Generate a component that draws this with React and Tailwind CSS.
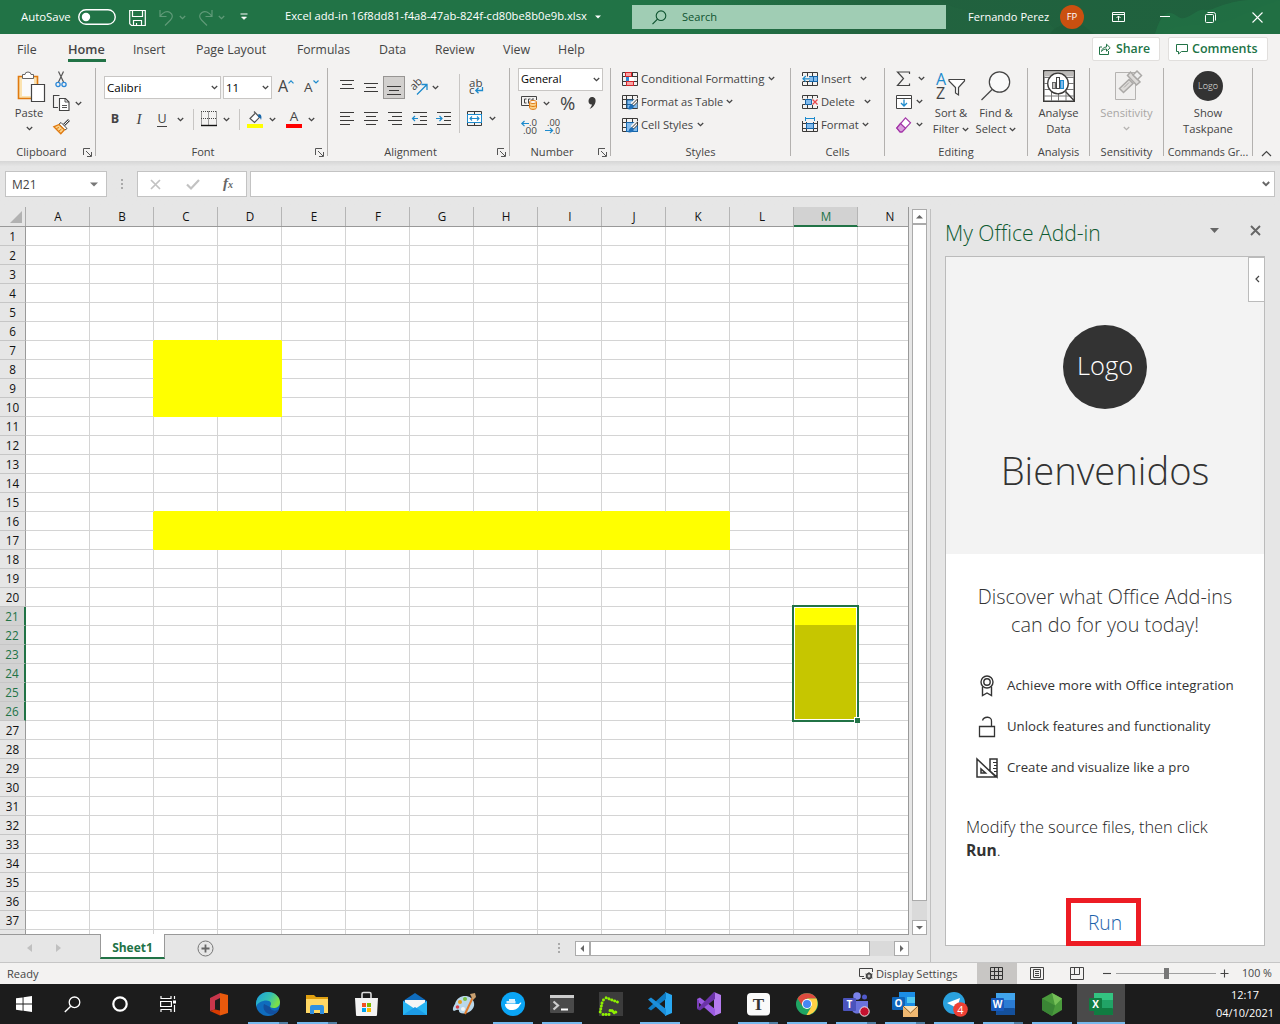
import React from "react";

/* ---------- small building blocks ---------- */
const Svg = ({ w, h, className = "", children, ...rest }) => (
  <svg width={w} height={h} viewBox={`0 0 ${w} ${h}`} fill="none" className={`shrink-0 overflow-visible ${className}`} {...rest}>
    {children}
  </svg>
);
const Chev = ({ className = "", color = "#444" }) => (
  <Svg w={7} h={5} className={className}>
    <path d="M.8 1l2.7 2.6L6.2 1" stroke={color} strokeWidth="1.3" />
  </Svg>
);
const B = "#1e8bcd";

const Launcher = () => (
  <Svg w={9} h={9}>
    <path d="M.5 7V.5H7M3 3l5 5M8.5 4v4.500H4" stroke="#555" />
  </Svg>
);

function Group({ className, label, launcher, children }) {
  return (
    <section className={`flex shrink-0 ${className}`}>
      <div className="flex min-w-0 flex-1 flex-col">
        <div className="h-[76px] w-full shrink-0">{children}</div>
        <div className="flex h-[16px] shrink-0 items-center">
          <div className="flex-1 text-center text-[11.1px] whitespace-nowrap">{label}</div>
          {launcher && <div className="w-[12px] shrink-0"><Launcher /></div>}
        </div>
      </div>
      <div className="h-[88px] w-px bg-[#b3b1af]" />
    </section>
  );
}

/* ---------- title bar ---------- */
function TitleBar() {
  return (
    <header className="relative flex h-[34px] items-center bg-linear-to-r from-[#217346] from-55% via-[#22633f] via-68% to-[#20643f] text-[11.2px] text-white">
      <Svg w={340} h={34} className="absolute right-0 top-0">
        <path d="M0 0c30 20 60 4 90 14s20 20 40 20h90c20-14 50-6 70-14s30-14 50-20z" fill="#1f5f3b" opacity=".35" />
        <path d="M215 34c5-18 12-26 22-18s18-8 28-6 20-14 75-10v34z" fill="#217346" opacity=".75" />
        <path d="M110 34c6-10 22-12 34-8l10 8z" fill="#1c5a38" opacity=".5" />
      </Svg>
      <div className="z-10 flex w-full items-center">
        <span className="ml-[21px] w-[57px] text-[11.4px]">AutoSave</span>
        <Svg w={38} h={17}>
          <rect x=".75" y=".750" width="36.500" height="14.500" rx="7.250" stroke="#fff" strokeWidth="1.400" />
          <circle cx="8" cy="8" r="4.200" fill="#fff" />
        </Svg>
        <Svg w={17} h={17} className="ml-[13px]">
          <path d="M.7 1.500h15.600v15H2.500L.7 14.700zM3.500 1.500v6h10v-6M4.500 16.500v-5h8v5M7.500 16v-2" stroke="#fff" strokeWidth="1.200" />
        </Svg>
        <Svg w={15} h={17} className="ml-[13px]">
          <path d="M1 1v6.500h6.500M1.200 7.200C4 3 8 1.500 11 3.500s3 5 .5 7.500L6 16.500" stroke="#5f9a78" strokeWidth="1.200" />
        </Svg>
        <Chev className="ml-[5px]" color="#5f9a78" />
        <Svg w={15} h={17} className="ml-[12px]">
          <path d="M14 1v6.500H7.500M13.800 7.200C11 3 7 1.500 4 3.500s-3 5-.5 7.500L9 16.500" stroke="#5f9a78" strokeWidth="1.200" />
        </Svg>
        <Chev className="ml-[5px]" color="#5f9a78" />
        <Svg w={8} h={8} className="ml-[15px]">
          <path d="M.5 1h7" stroke="#fff" />
          <path d="M1.500 4h5L4 6.500z" fill="#fff" stroke="#fff" strokeWidth=".6" />
        </Svg>
        <span className="-mt-px ml-[37px] w-[310px] text-[11.23px] whitespace-nowrap">Excel add-in 16f8dd81-f4a8-47ab-824f-cd80be8b0e9b.xlsx</span>
        <Svg w={6} h={4}><path d="M0 .5h6L3 3.500z" fill="#fff" /></Svg>
        <div className="ml-[31px] flex h-[24px] w-[314px] items-center bg-[#a0cdb4] text-[11.1px] text-[#0f5430]">
          <Svg w={15} h={15} className="ml-[20px]">
            <circle cx="9" cy="5.700" r="4.800" stroke="#0f5430" strokeWidth="1.100" />
            <path d="M5.500 9.200L.5 14.200" stroke="#0f5430" strokeWidth="1.200" />
          </Svg>
          <span className="ml-[15px]">Search</span>
        </div>
        <span className="mt-px ml-[22px] w-[92px] text-[11.05px] whitespace-nowrap">Fernando Perez</span>
        <div className="flex h-[24px] w-[24px] shrink-0 items-center justify-center rounded-full bg-[#ca5010] text-[9.500px]">FP</div>
        <Svg w={13} h={10} className="ml-[28px]">
          <path d="M.5.5h12v9H.5zM.5 2.500h12M6.500 8.500V4M4.500 6l2-2 2 2" stroke="#fff" />
        </Svg>
        <Svg w={10} h={2} className="ml-[35px]"><path d="M0 .5h10" stroke="#fff" /></Svg>
        <Svg w={11} h={11} className="ml-[35px]">
          <rect x=".5" y="2.500" width="8" height="8" rx="1" stroke="#fff" />
          <path d="M2.500.5h6q2 0 2 2v6" stroke="#fff" />
        </Svg>
        <Svg w={11} h={11} className="ml-[36px]"><path d="M.5.5l10 10M10.500.5l-10 10" stroke="#fff" strokeWidth="1.100" /></Svg>
      </div>
    </header>
  );
}

/* ---------- tabs ---------- */
function Tabs() {
  return (
    <nav className="flex h-[32px] items-start text-[12.4px]">
      <span className="ml-[17px] mt-[7px] w-[51px]">File</span>
      <span className="mt-[6px] w-[38px] border-b-[3px] border-[#217346] pb-px text-[12.7px] leading-[18px] font-semibold">Home</span>
      <span className="ml-[27px] mt-[7px] w-[63px] text-[12px]">Insert</span>
      <span className="mt-[7px] w-[101px]">Page Layout</span>
      <span className="mt-[7px] w-[82px] text-[12.2px]">Formulas</span>
      <span className="mt-[7px] w-[56px]">Data</span>
      <span className="mt-[7px] w-[68px] text-[12.1px]">Review</span>
      <span className="mt-[7px] w-[55px]">View</span>
      <span className="mt-[7px]">Help</span>
      <div className="mr-[12px] ml-auto mt-[3px] flex gap-[8px] font-semibold text-[#217346]">
        <div className="flex h-[24px] w-[68px] items-center rounded-[2px] border border-[#e1dfdd] bg-white text-[12.3px]">
          <Svg w={12} h={12} className="ml-[6px]">
            <path d="M3 4H.5v7.500h9V8M2.500 8.500C3 5.500 5 4 7.500 4V1.200l3.700 3.600-3.700 3.400V6C5.500 6 4 6.500 2.500 8.500z" stroke="#217346" />
          </Svg>
          <span className="mt-px ml-[5px]">Share</span>
        </div>
        <div className="flex h-[24px] w-[100px] items-center rounded-[2px] border border-[#e1dfdd] bg-white text-[12.5px]">
          <Svg w={12} h={11} className="ml-[7px]"><path d="M.5.5h11v7H5.500L2.500 10V7.500h-2z" stroke="#217346" /></Svg>
          <span className="mt-px ml-[4px]">Comments</span>
        </div>
      </div>
    </nav>
  );
}

/* ---------- ribbon icons ---------- */
const Lines = ({ rows, className }) => (
  <Svg w={14} h={14} className={className}>
    {rows.map(([x, y, w]) => <path key={y} d={`M${x} ${y + 0.5}h${w}`} stroke="#3b3a39" />)}
  </Svg>
);
const Indent = ({ right }) => (
  <Svg w={15} h={14}>
    <path d="M1 .5h14M8 4.500h7M8 8.500h7M1 12.500h14" stroke="#3b3a39" />
    <path d={right ? "M0 6.500h5.500M3.500 4l2.500 2.500L3.500 9" : "M.8 6.500H6M3 4L.5 6.500 3 9"} stroke={B} strokeWidth="1.200" />
  </Svg>
);
const Sep = ({ className = "" }) => <div className={`w-px bg-[#c8c6c4] ${className}`} />;

const Brush = () => (
  <>
    <path d="M15.800 3.500L10 9.500" stroke="#f3f2f1" strokeWidth="4" />
    <path d="M15.500 4L10 9.500l1.500 1.500 4-4z" fill="#fff" stroke="#333" strokeWidth="1" />
    <path d="M10.800 9.500c-2-.5-3.300.8-3.800 2.500-.3 1-1 1.500-2.200 1.700 3.400 1.800 7.200.3 7-2.500z" fill="#1e6fb8" />
  </>
);
const TableBase = () => (
  <path d="M.5.5h15v13H.5zM.5 4.500h15M.5 9.500h15M4.500.5v13M10.500.5v13" stroke="#3b3a39" />
);
const CondFmt = () => (
  <Svg w={16} h={14}><TableBase />
    <rect x="3.500" y=".5" width="6" height="4" fill="#f8a5a5" stroke="#d3262b" />
    <rect x="4" y="5" width="3" height="4.500" fill="#2b88d8" /><rect x="7" y="5" width="5" height="4" fill="#fff" />
    <rect x="4.500" y="9.500" width="7" height="4" fill="#f8a5a5" stroke="#d3262b" />
  </Svg>
);
const FmtTable = () => (
  <Svg w={16} h={14}><TableBase /><rect x="5" y="5" width="10.500" height="8" fill="#83bbec" /><path d="M5 9.500h6M5 13V5h10M10.500 5v5" stroke="#1565a9" /><Brush /></Svg>
);
const CellSty = () => (
  <Svg w={16} h={14}><TableBase /><rect x="4.500" y="4.500" width="11" height="9" fill="#83bbec" stroke="#1565a9" /><Brush /></Svg>
);
const InsertIc = () => (
  <Svg w={16} h={14}><path d="M.5 4V.5h15v13H.5V10M5.500.5v4M10.500.5v13M.5 9.500h15M5.500 10v3.500" stroke="#3b3a39" />
    <rect x="7.500" y="4.500" width="8" height="5" fill="#83bbec" stroke="#1565a9" /><path d="M11.500 4.500v5" stroke="#1565a9" />
    <path d="M0 6.800h8" stroke="#f3f2f1" strokeWidth="3" /><path d="M8 6.800H1M3.800 4L1 6.800l2.800 2.800" stroke={B} strokeWidth="1.200" /></Svg>
);
const DeleteIc = () => (
  <Svg w={16} h={14}><path d="M.5 3.500v-3h15V3M5.500.5v3M10.500.5v3M.5 9.500v4h15V11M5.500 10v3.500M10.500 10v3.500M.5 4.500h3M.5 9.500h3" stroke="#3b3a39" />
    <path d="M3.500 4.500h6v5h-6z" fill="#83bbec" stroke="#1565a9" /><path d="M10.500 4.500l5 5M15.500 4.500l-5 5" stroke="#e8474c" strokeWidth="1.300" /></Svg>
);
const FormatIc = () => (
  <Svg w={16} h={16}><path d="M3.500 0v4M12.500 0v4M3.500 1.500h9" stroke={B} />
    <path d="M.5 4v10.500h15V4M.5 6.500h15M.5 11.500h15M4.500 5v9.500M11.500 5v9.500" stroke="#3b3a39" />
    <rect x="4.500" y="6.500" width="7" height="5" fill="#83bbec" stroke="#1565a9" /></Svg>
);

/* ---------- ribbon ---------- */
function Ribbon() {
  return (
    <div className="flex h-[94px] pt-[2px] text-[11.2px]">
      <Group className="w-[96px]" label="Clipboard" launcher>
        <div className="flex">
          <div className="flex w-[58px] flex-col items-center">
            <Svg w={30} h={32} className="mt-[3px] ml-[4px]">
              <path d="M2.500 5.500h19v22h-19z" fill="#fbe3b0" stroke="#e07a10" strokeWidth="1.600" />
              <path d="M6 8h12v17H6z" fill="#fafafa" />
              <path d="M6.500 7.500v-4H9q0-2.500 3-2.500t3 2.500h2.500v4z" fill="#fff" stroke="#666" />
              <path d="M15.500 13.500h13v17h-13z" fill="#fff" stroke="#444" strokeWidth="1.200" />
            </Svg>
            <span className="mt-[1px] leading-[18px]">Paste</span>
            <Chev className="mt-[4px]" />
          </div>
          <div className="flex flex-col">
            <Svg w={16} h={17} className="ml-[-5px] mt-[3px]">
              <path d="M5.500.5l5 10.500M10.500.5l-5 10.500" stroke="#555" strokeWidth="1.200" />
              <circle cx="5" cy="13.500" r="2.100" stroke="#2b88d8" strokeWidth="1.300" /><circle cx="11" cy="13.500" r="2.100" stroke="#2b88d8" strokeWidth="1.300" />
            </Svg>
            <div className="mt-[7px] ml-[-5px] flex items-center">
              <Svg w={17} h={16}>
                <path d="M5 12.500H.5v-12h6" stroke="#444" strokeWidth="1.100" />
                <path d="M6.500 3.500h6l3.500 3.500v8.500H6.500z" fill="#fff" stroke="#444" strokeWidth="1.100" /><path d="M12 3.500V7h4M9 10.500h5M9 12.500h5" stroke="#444" strokeWidth=".9" />
              </Svg>
              <Chev className="ml-[5px]" />
            </div>
            <Svg w={17} h={16} className="mt-[8px] ml-[-5px]">
              <path d="M16 1l-5 5" stroke="#444" strokeWidth="2.600" /><path d="M15.700 1.300l-4.500 4.500" stroke="#fff" strokeWidth="1" />
              <path d="M8 3.500l6 6-2 1.500-6-5.800z" fill="#fff" stroke="#444" />
              <path d="M6 5.500L.8 7.800l7 7 3.700-4z" fill="#fbd28a" stroke="#e07a10" strokeWidth="1.300" /><path d="M3.500 9.500l2.500-1M6 12l2.500-2" stroke="#e07a10" />
            </Svg>
          </div>
        </div>
      </Group>

      <Group className="w-[232px]" label={<span className="mr-[5px]">Font</span>} launcher>
        <div className="flex pt-[8px]">
          <div className="ml-[8px] flex h-[23px] w-[117px] items-center justify-between border border-[#c8c6c4] bg-white px-[2px] text-[11.600px] text-black">Calibri<Chev /></div>
          <div className="ml-[2px] flex h-[23px] w-[49px] items-center justify-between border border-[#c8c6c4] bg-white px-[2px] text-[11.5px] text-black">11<Chev /></div>
          <div className="ml-[6px] flex w-[26px]"><span className="text-[16px] leading-[20px]">A</span><Svg w={6} h={4} className="mt-[4px]"><path d="M.5 3.300L3 .8l2.500 2.500" stroke={B} strokeWidth="1.200" /></Svg></div>
          <div className="flex"><span className="text-[13.5px] leading-[22px]">A</span><Svg w={6} h={4} className="mt-[4px]"><path d="M.5.5L3 3 5.500.5" stroke={B} strokeWidth="1.200" /></Svg></div>
        </div>
        <div className="mt-[9px] flex h-[22px] items-center text-[12.5px]">
          <span className="w-[38px] text-center font-bold">B</span>
          <span className="w-[10px] text-center font-['Liberation_Serif'] text-[15px] italic">I</span>
          <span className="ml-[13px] w-[10px] border-b border-[#444] text-center leading-[14px]">U</span>
          <Chev className="ml-[10px]" />
          <Sep className="ml-[9px] h-[21px]" />
          <Svg w={16} h={16} className="ml-[7px]">
            <path d="M.5.5v13M15.500.5v13M7.500.5v13" stroke="#444" strokeDasharray="1 1" /><path d="M0 .5h16M0 7.500h16" stroke="#444" strokeDasharray="1 1" /><path d="M0 14.500h16" stroke="#111" strokeWidth="1.400" />
          </Svg>
          <Chev className="ml-[6px]" />
          <Sep className="ml-[9px] h-[21px]" />
          <Svg w={16} h={18} className="ml-[7px]">
            <path d="M8 3.500l-5 5 4.500 4 5-5.200L7 1.500" fill="#fff" stroke="#555" strokeWidth="1.200" /><path d="M11.500 4c3 0 3.500 3 2.500 6-.5-2-1.500-3-3-3z" fill="#1565a9" /><rect y="14" width="16" height="4" fill="#ff0" />
          </Svg>
          <Chev className="ml-[6px]" />
          <div className="-mt-px ml-[10px] flex w-[16px] flex-col items-center">
            <span className="text-[13.500px] leading-[15px]">A</span><span className="h-[4px] w-full bg-[#f00]" />
          </div>
          <Chev className="ml-[6px]" />
        </div>
      </Group>

      <Group className="w-[182px]" label={<span className="mr-[4px]">Alignment</span>} launcher>
        <div className="flex">
          <div className="ml-[7px] w-[124px] pt-[8px]">
            <div className="flex h-[23px] items-center">
              <div className="flex w-[24px] justify-center"><Lines className="mb-[6px]" rows={[[0, 2, 14], [2, 6, 10], [0, 10, 14]]} /></div>
              <div className="flex w-[24px] justify-center"><Lines rows={[[0, 2, 14], [2, 6, 10], [0, 10, 14]]} /></div>
              <div className="flex h-[23px] w-[22px] items-center justify-center border border-[#979593] bg-[#d2d0ce]"><Lines className="mt-[6px]" rows={[[0, 2, 14], [2, 6, 10], [0, 10, 14]]} /></div>
              <Svg w={18} h={17} className="ml-[6px]">
                <text x="2" y="10" transform="rotate(-45 5 10)" fontSize="11" fill="#444">ab</text>
                <path d="M6 15.500L15.500 6M10.500 5.500H16v5.500" stroke={B} strokeWidth="1.300" />
              </Svg>
              <Chev className="ml-[3px]" />
            </div>
            <div className="mt-[9px] flex h-[22px] items-center">
              <div className="flex w-[24px] justify-center"><Lines rows={[[0, 0, 14], [0, 4, 10], [0, 8, 14], [0, 12, 10]]} /></div>
              <div className="flex w-[24px] justify-center"><Lines rows={[[0, 0, 14], [2, 4, 10], [0, 8, 14], [2, 12, 10]]} /></div>
              <div className="flex w-[24px] justify-center"><Lines rows={[[0, 0, 14], [4, 4, 10], [0, 8, 14], [4, 12, 10]]} /></div>
              <div className="flex w-[25px] justify-center"><Indent /></div>
              <div className="flex w-[23px] justify-center"><Indent right /></div>
            </div>
          </div>
          <Sep className="mt-[6px] h-[59px]" />
          <div className="pt-[8px] pl-[7px]">
            <Svg w={17} h={18} className="mt-[2px] ml-[2px]">
              <text x="0" y="8.500" fontSize="11.500" fill="#444">ab</text><text x="0" y="16" fontSize="11.500" fill="#444">c</text>
              <path d="M13.500 9v3.500H7M9.500 9.800L6.800 12.500l2.700 2.700" stroke={B} strokeWidth="1.300" />
            </Svg>
            <div className="mt-[15px] flex items-center">
              <Svg w={15} h={15}>
                <path d="M.5.5h14v14H.5zM7.500.5v3M7.500 11.500v3" stroke="#3b3a39" /><rect x=".5" y="3.500" width="14" height="8" fill="#fff" stroke={B} /><path d="M3 7.500h9M5 5.500l-2 2 2 2M10 5.500l2 2-2 2" stroke={B} strokeWidth="1.100" />
              </Svg>
              <Chev className="ml-[7px]" />
            </div>
          </div>
        </div>
      </Group>

      <Group className="w-[101px]" label={<span className="mr-[4px]">Number</span>} launcher>
        <div className="ml-[8px] flex h-[23px] w-[85px] items-center justify-between border border-[#c8c6c4] bg-white px-[2px] text-[11px] text-black"><span className="mb-px">General</span><Chev /></div>
        <div className="flex h-[24px] items-center">
          <Svg w={17} h={14} className="ml-[11px]">
            <path d="M8 9.500H.5v-9h15V4" stroke="#444" /><path d="M5.500 3h-2v4h2M7.500 7.500V3h2M11 5V3h2" stroke="#444" />
            <path d="M8.500 6v5.500c0 2.500 7 2.500 7 0V6" fill="#fbd28a" stroke="#e07a10" /><ellipse cx="12" cy="6" rx="3.500" ry="1.500" fill="#fff" stroke="#e07a10" /><path d="M8.500 9c0 2 7 2 7 0" stroke="#e07a10" />
          </Svg>
          <Chev className="ml-[5px]" />
          <span className="ml-[10px] w-[17px] text-[18.500px]">%</span>
          <Svg w={8} h={12} className="ml-[11px]"><path d="M4 0c3 0 4 2.500 3.500 5S5 10.500 1.500 12c1.500-2 2.200-3 2.500-4.500C2 8 .5 6.200.5 4S2 0 4 0z" fill="#3b3a39" /></Svg>
        </div>
        <div className="mt-[4px] flex items-center">
          <Svg w={17} h={17} className="ml-[11px]">
            <path d="M8 4.500H.8M3.500 2L.8 4.500l2.700 2.700" stroke={B} strokeWidth="1.200" /><text x="8" y="7" fontSize="9.500" textLength="8" lengthAdjust="spacingAndGlyphs" fill="#444">.0</text><text x="2" y="15" fontSize="9.500" textLength="14" lengthAdjust="spacingAndGlyphs" fill="#444">.00</text>
          </Svg>
          <Svg w={17} h={17} className="ml-[7px]">
            <path d="M0 11.500h7.500M5 9L7.600 11.500 5 14" stroke={B} strokeWidth="1.200" /><text x="2" y="7" fontSize="9.500" textLength="13" lengthAdjust="spacingAndGlyphs" fill="#444">.00</text><text x="8" y="15" fontSize="9.500" textLength="7" lengthAdjust="spacingAndGlyphs" fill="#444">.0</text>
          </Svg>
        </div>
      </Group>

      <Group className="w-[180px]" label="Styles">
        <div className="-mt-[1px] ml-[11px] whitespace-nowrap">
          <div className="flex h-[23px] items-center gap-[3px]"><CondFmt /><span className="w-[124px] text-[11.500px]">Conditional Formatting</span><Chev /></div>
          <div className="flex h-[23px] items-center gap-[3px]"><FmtTable /><span className="mt-px w-[82px] text-[11.050px]">Format as Table</span><Chev /></div>
          <div className="flex h-[23px] items-center gap-[3px]"><CellSty /><span className="mt-px w-[53px]">Cell Styles</span><Chev /></div>
        </div>
      </Group>

      <Group className="w-[94px]" label="Cells">
        <div className="-mt-[1px] ml-[11px] whitespace-nowrap">
          <div className="flex h-[23px] items-center gap-[3px]"><InsertIc /><span className="mt-px w-[36px]">Insert</span><Chev /></div>
          <div className="flex h-[23px] items-center gap-[3px]"><DeleteIc /><span className="mt-px w-[40px]">Delete</span><Chev /></div>
          <div className="flex h-[23px] items-center gap-[3px]"><FormatIc /><span className="mt-px w-[38px]">Format</span><Chev /></div>
        </div>
      </Group>

      <Group className="w-[143px]" label="Editing">
        <div className="flex">
          <div className="-mt-[1px] ml-[11px] w-[34px]">
            <div className="flex h-[23px] items-center"><Svg w={16} h={16}><path d="M13.500 3V1H1.500l6 6.500-6 7h12v-2" stroke="#444" strokeWidth="1.200" /></Svg><Chev className="ml-[6px]" /></div>
            <div className="flex h-[23px] items-center"><Svg w={16} h={14}><path d="M.5.5h15v13H.5zM.5 3.500h15" fill="#fff" stroke="#444" /><path d="M8 4.500V11M5 8l3 3 3-3" stroke={B} strokeWidth="1.300" /></Svg><Chev className="ml-[4px]" /></div>
            <div className="flex h-[23px] items-center"><Svg w={16} h={16}><path d="M9.500.8l5 5-8.500 9H4L.8 11z" fill="#fff" stroke="#a333a8" strokeWidth="1.200" /><path d="M4.500 6.500l5 4.800L6 14.800H4L.8 11z" fill="#d9a0dc" stroke="#a333a8" strokeWidth="1.200" /></Svg><Chev className="ml-[4px]" /></div>
          </div>
          <div className="flex w-[42px] flex-col items-center leading-[16px] whitespace-nowrap">
            <Svg w={30} h={30} className="mt-[4px]">
              <text x="0" y="12.500" fontSize="16" fill={B}>A</text><text x="0" y="26.500" fontSize="16" fill="#444">Z</text>
              <path d="M13 7.500h15.500v1.500l-6 6.500v7.500l-3 -2v-5.500L13 9z" fill="#fff" stroke="#444" strokeWidth="1.200" />
            </Svg>
            <span className="mt-[3px]">Sort &amp;</span>
            <span className="flex items-center gap-[3px]">Filter<Chev /></span>
          </div>
          <div className="ml-[2px] flex w-[44px] flex-col items-center leading-[16px] whitespace-nowrap">
            <Svg w={30} h={30} className="mt-[3px]">
              <circle cx="18.500" cy="11" r="10.200" fill="#fafafa" stroke="#444" strokeWidth="1.200" /><path d="M11.100 18.500L.5 29" stroke="#444" strokeWidth="1.200" />
            </Svg>
            <span className="mt-[4px]">Find &amp;</span>
            <span className="flex items-center gap-[3px]">Select<Chev /></span>
          </div>
        </div>
      </Group>

      <Group className="w-[62px]" label="Analysis">
        <div className="flex flex-col items-center leading-[16px]">
          <Svg w={32} h={32} className="mt-[2px]">
            <rect x=".75" y=".75" width="30.500" height="30.500" fill="#fff" stroke="#3b3a39" strokeWidth="1.500" /><rect x="1.500" y="1.500" width="29" height="5" fill="#bdbbb9" />
            <path d="M1 7.500h30M1 13.500h30M1 19.500h30M1 26h30M8.500 19v12M15.500 19v12M23 19v12" stroke="#777" />
            <circle cx="15" cy="13.500" r="10.300" fill="#fff" stroke="#3b3a39" strokeWidth="1.300" />
            <rect x="9.500" y="12.500" width="3" height="6" fill="#c8c6c4" stroke="#666" /><rect x="13.500" y="7.500" width="3" height="11" fill="#fff" stroke="#444" /><rect x="17.500" y="10.500" width="3" height="8" fill="#83bbec" stroke={B} />
            <path d="M22.500 21.500l9 9.500" stroke="#3b3a39" strokeWidth="1.400" />
          </Svg>
          <span className="mt-[3px]">Analyse</span><span>Data</span>
        </div>
      </Group>

      <Group className="w-[74px]" label="Sensitivity">
        <div className="flex flex-col items-center leading-[16px] text-[#a8a6a4]">
          <Svg w={28} h={31} className="mt-[2px] ml-[5px]">
            <path d="M.5 2.500h20v27H.5z" fill="#f0efee" stroke="#b5b3b1" />
            <path d="M4.500 18.500L14 9.500l4 4-9.500 9z" fill="#dddbd9" stroke="#aaa8a6" strokeWidth="1.500" /><path d="M9 17.500l5-5" stroke="#aaa8a6" />
            <path d="M12.500 5.500l3-3.500 9.500 10-3.500 3z" fill="#dddbd9" stroke="#aaa8a6" strokeWidth="1.500" /><path d="M18 5l4-4 4.500 4.500-4 4z" fill="#eee" stroke="#aaa8a6" strokeWidth="1.500" />
          </Svg>
          <span className="mt-[4px]">Sensitivity</span><Chev className="mt-[5px]" color="#b5b3b1" />
        </div>
      </Group>

      <Group className="w-[89px]" label={<span className="text-[10.700px]">Commands Gr...</span>}>
        <div className="flex flex-col items-center leading-[16px]">
          <div className="mt-[3px] flex h-[30px] w-[30px] items-center justify-center rounded-full bg-[#333] text-[9px] font-light text-[#eee]">Logo</div>
          <span className="mt-[4px]">Show</span><span>Taskpane</span>
        </div>
      </Group>
      <div className="flex flex-1 items-end justify-center pb-[3px]"><Svg w={11} h={7}><path d="M1 6l4.500-4.500L10 6" stroke="#444" strokeWidth="1.200" /></Svg></div>
    </div>
  );
}

/* ---------- formula bar ---------- */
function FormulaBar() {
  return (
    <div className="flex h-[46px] bg-linear-to-b from-[#d6d6d6] from-0% to-[#e6e6e6] to-12% pt-[10px]">
      <div className="ml-[5px] flex h-[26px] w-[102px] items-center justify-between border border-[#c3c3c3] bg-white pr-[8px] pl-[6px] text-[12px] text-[#444]"><span className="mt-px">M21</span><Svg w={8} h={5}><path d="M0 .5h8L4 4.500z" fill="#777" /></Svg></div>
      <div className="ml-[14px] flex h-[26px] w-[2px] flex-col justify-center gap-[2px]"><i className="h-[2px] w-[2px] bg-[#aaa]" /><i className="h-[2px] w-[2px] bg-[#aaa]" /><i className="h-[2px] w-[2px] bg-[#aaa]" /></div>
      <div className="ml-[14px] flex h-[26px] w-[110px] items-center border border-[#c3c3c3] bg-white">
        <Svg w={11} h={11} className="ml-[12px]"><path d="M1 1l9 9M10 1l-9 9" stroke="#c2c2c2" strokeWidth="1.700" /></Svg>
        <Svg w={14} h={11} className="ml-[25px]"><path d="M1 5.500l4 4 8-8.500" stroke="#c2c2c2" strokeWidth="2.200" /></Svg>
        <span className="ml-[23px] font-['Liberation_Serif'] text-[15px] leading-[20px] font-bold italic text-[#666]">f<span className="text-[10px]">x</span></span>
      </div>
      <div className="ml-[3px] flex h-[26px] w-[1025px] items-center justify-end border border-[#c3c3c3] bg-white pr-[4px]"><Svg w={8} h={6}><path d="M.8 1L4 4.200 7.200 1" stroke="#666" strokeWidth="1.900" /></Svg></div>
    </div>
  );
}

/* ---------- sheet ---------- */
const COLS = "ABCDEFGHIJKLMN".split("");
const ROWS = Array.from({ length: 38 }, (_, i) => i + 1);
const filled = (c, r) =>
  ((c === 2 || c === 3) && r >= 7 && r <= 10) || (c >= 2 && c <= 10 && (r === 16 || r === 17));
const cellClass = (c, r) => {
  const bg = filled(c, r) ? "bg-[#ff0]" : "bg-white";
  const right = filled(c, r) || filled(c + 1, r) ? "border-r-[#ff0]" : "border-r-[#d4d4d4]";
  const bottom = filled(c, r) || filled(c, r + 1) ? "border-b-[#ff0]" : "border-b-[#d4d4d4]";
  return `${bg} ${right} ${bottom}`;
};

function Sheet() {
  return (
    <div className="relative h-[727px] w-[909px] overflow-hidden border-r border-[#999]">
      <div className="flex h-[20px] w-[922px] border-b border-[#999] text-[11.700px] text-[#111]">
        <div className="flex w-[26px] shrink-0 items-end justify-end border-r border-[#ababab] pr-[3px] pb-[3px]"><Svg w={12} h={12}><path d="M12 0v12H0z" fill="#b2b2b2" /></Svg></div>
        {COLS.map((c) => (
          <div key={c} className={`flex h-[19px] w-[64px] shrink-0 items-center justify-center border-r border-[#b5b5b5] pl-px ${c === "M" ? "bg-[#d2d2d2] text-[#217346] shadow-[0_1px_0_#217346,inset_0_-1px_0_#217346]" : ""}`}>{c}</div>
        ))}
      </div>
      {ROWS.map((r) => {
        const on = r >= 21 && r <= 26;
        return (
          <div key={r} className="flex h-[19px] w-[922px]">
            <div className={`flex w-[26px] shrink-0 items-center justify-center border-b border-b-[#c6c6c6] text-[11.700px] ${on ? "border-r-2 border-r-[#217346] bg-[#d2d2d2] text-[#217346]" : "border-r border-r-[#999] text-[#111]"}`}><span className="leading-[16px]">{r < 38 ? r : null}</span></div>
            {COLS.map((c, i) => <div key={c} className={`w-[64px] shrink-0 border-r border-b ${cellClass(i, r)}`} />)}
          </div>
        );
      })}
      <div className="absolute top-[398px] left-[792px] h-[117px] w-[67px] border-2 border-[#217346] bg-white p-px">
        <div className="h-[17px] bg-[#ff0]" /><div className="h-[94px] bg-[#c6c600]" />
        <div className="absolute -right-[3px] -bottom-[3px] h-[6px] w-[6px] border-t border-l border-white bg-[#217346]" />
      </div>
    </div>
  );
}

const ArrowBtn = ({ d }) => (
  <div className="flex h-[15px] w-[15px] shrink-0 items-center justify-center border border-[#ababab] bg-white"><Svg w={7} h={7}><path d={d} fill="#666" /></Svg></div>
);

function SheetArea() {
  return (
    <div className="flex w-[930px] flex-col">
      <div className="flex h-[727px]">
        <Sheet />
        <div className="ml-[3px] flex w-[15px] flex-col pt-[2px]">
          <ArrowBtn d="M0 5.500h7L3.500 2z" />
          <div className="h-[677px] border border-[#ababab] bg-white" />
          <div className="flex-1 bg-[#dadada]" />
        </div>
      </div>
      <div className="flex h-[28px]">
        <div className="flex w-[909px] border-t border-[#999]">
          <Svg w={5} h={8} className="mt-[9px] ml-[27px]"><path d="M5 0v8L0 4z" fill="#c0c0c0" /></Svg>
          <Svg w={5} h={8} className="mt-[9px] ml-[24px]"><path d="M0 0v8l5-4z" fill="#c0c0c0" /></Svg>
          <div className="-mt-px ml-[39px] h-[25px] w-[65px] border-x border-b-2 border-x-[#999] border-b-[#217346] bg-white text-center text-[12px] leading-[27px] font-bold text-[#217346]">Sheet1</div>
          <Svg w={17} h={17} className="mt-[5px] ml-[32px]"><circle cx="8.500" cy="8.500" r="7.500" stroke="#777" /><path d="M4.500 8.500h8M8.500 4.500v8" stroke="#666" strokeWidth="1.800" /></Svg>
          <div className="mt-[8px] ml-[344px] flex flex-col gap-[2px]"><i className="h-[2px] w-[2px] bg-[#aaa]" /><i className="h-[2px] w-[2px] bg-[#aaa]" /><i className="h-[2px] w-[2px] bg-[#aaa]" /></div>
          <div className="mt-[6px] ml-[15px] flex h-[15px] w-[334px]">
            <ArrowBtn d="M5 0v7L1.500 3.500z" />
            <div className="w-[280px] border border-[#ababab] bg-white" />
            <div className="flex-1 bg-[#dadada]" />
            <ArrowBtn d="M2 0v7l3.500-3.500z" />
          </div>
        </div>
        <div className="-mt-[14px] ml-[3px]"><ArrowBtn d="M0 2h7L3.500 5.500z" /></div>
      </div>
    </div>
  );
}

/* ---------- task pane ---------- */
const Feature = ({ icon, children, className }) => (
  <div className="flex h-[41px] items-center"><div className="flex w-[30px] shrink-0 justify-center">{icon}</div><span className={`ml-[5px] whitespace-nowrap ${className}`}>{children}</span></div>
);
function TaskPane() {
  return (
    <aside className="mt-[2px] flex flex-1 flex-col border-l border-[#c0c0c0] pl-[14px]">
      <div className="flex h-[47px] items-center">
        <h2 className="w-[265px] text-[21.100px] font-light text-[#0d5a30]">My Office Add-in</h2>
        <Svg w={9} h={5} className="-mt-[4px]"><path d="M0 0h9L4.500 5z" fill="#666" /></Svg>
        <Svg w={11} h={11} className="-mt-[5px] ml-[31px]"><path d="M1 1l9 9M10 1l-9 9" stroke="#666" strokeWidth="1.900" /></Svg>
      </div>
      <div className="relative flex h-[690px] w-[320px] flex-col border border-[#bbb] bg-white text-[#333]">
        <div className="absolute top-0 -right-px flex h-[45px] w-[17px] items-center justify-center border border-[#bbb] bg-white"><Svg w={5} h={8} className="-mt-[2px] ml-[2px]"><path d="M4 1L1 4l3 3" stroke="#444" strokeWidth="1.200" /></Svg></div>
        <div className="flex h-[297px] shrink-0 flex-col items-center bg-[#f3f3f3] pt-[68px]">
          <div className="flex h-[84px] w-[84px] items-center justify-center rounded-full bg-[#333] pb-[3px] text-[25.500px] font-light text-white">Logo</div>
          <h1 className="mt-[34px] text-[38.200px] leading-[54px] font-light">Bienvenidos</h1>
        </div>
        <p className="mt-[29px] text-center text-[19.850px] leading-[28px] font-light whitespace-nowrap">Discover what Office Add-ins<br />can do for you today!</p>
        <div className="mt-[26px] ml-[26px] text-[13.200px]">
          <Feature className="text-[13.350px]" icon={<Svg w={16} h={22}><circle cx="8" cy="7" r="6" stroke="#333" strokeWidth="1.400" /><circle cx="8" cy="7" r="3.200" stroke="#333" strokeWidth="1.400" /><path d="M3.500 11.500v9L8 18l4.500 2.500v-9" stroke="#333" strokeWidth="1.400" /></Svg>}>Achieve more with Office integration</Feature>
          <Feature icon={<Svg w={18} h={22}><path d="M1.500 10.500h15v10h-15zM4.500 4.500C6 0 14 0 13.500 5.500v5" stroke="#333" strokeWidth="1.300" /></Svg>}>Unlock features and functionality</Feature>
          <Feature icon={<Svg w={22} h={20}><path d="M1 1v18h19zM5 11v4h4.500zM14 1h7v18l-7-6z" stroke="#333" strokeWidth="1.500" /><path d="M17 4.500h4M18 7.500h3M17 10.500h4M18 13.500h3" stroke="#333" strokeWidth="1.200" /></Svg>}>Create and visualize like a pro</Feature>
        </div>
        <p className="mt-[28px] ml-[20px] text-[16.350px] leading-[23px] font-light whitespace-nowrap text-[#222]">Modify the source files, then click<br /><b className="text-[15.600px] font-bold text-[#333]">Run</b>.</p>
        <button className="mt-auto -mb-px ml-[120px] h-[48px] w-[75px] border-[5px] border-[#ed1c24] bg-white pt-[2px] pl-[3px] text-[19.300px] font-light text-[#1b62ab]">Run</button>
      </div>
    </aside>
  );
}

/* ---------- status bar ---------- */
function StatusBar() {
  return (
    <div className="flex h-[22px] items-center border-t border-[#c6c6c6] bg-[#f3f2f1] text-[11.100px] text-[#444]">
      <span className="mt-px ml-[7px] w-[852px]">Ready</span>
      <Svg w={15} h={14}><path d="M5 9.500H.5v-8h13V5M3 11.500h3" stroke="#444" /><circle cx="10" cy="9" r="2.500" stroke="#444" strokeWidth="1.500" /><path d="M10 5v8M6.500 7l7 4M13.500 7l-7 4" stroke="#444" /><circle cx="10" cy="9" r="1" fill="#f3f2f1" /></Svg>
      <span className="mt-px ml-[2px] w-[101px] whitespace-nowrap">Display Settings</span>
      <div className="flex h-full w-[40px] items-center justify-center bg-[#c8c6c4]"><Svg w={13} h={13} className="-mt-px mr-px"><path d="M.5.5h12v12H.5zM.5 4.500h12M.5 8.500h12M4.500.5v12M8.500.5v12" stroke="#333" /></Svg></div>
      <Svg w={14} h={13} className="-mt-px ml-[13px]"><path d="M.5.5h13v12H.5zM3.500 2.500h7v8h-7zM5 4.500h4M5 6.500h4M5 8.500h4" stroke="#444" /></Svg>
      <Svg w={14} h={13} className="-mt-px ml-[26px]"><path d="M.5.5h13v12H.5zM4.500.5v7M9.500.5v7M.5 7.500h9" stroke="#444" /></Svg>
      <Svg w={8} h={9} className="-mt-px ml-[19px]"><path d="M0 4.500h8" stroke="#444" strokeWidth="1.100" /></Svg>
      <div className="ml-[5px] flex h-[11px] w-[100px] items-center"><div className="h-px w-[48px] bg-[#a0a0a0]" /><div className="h-[11px] w-[5px] bg-[#777]" /><div className="h-px flex-1 bg-[#a0a0a0]" /></div>
      <Svg w={9} h={9} className="-mt-px ml-[4px]"><path d="M.5 4.500h8M4.500.5v8" stroke="#444" strokeWidth="1.100" /></Svg>
      <span className="ml-[13px] text-[10.700px] whitespace-nowrap">100 %</span>
    </div>
  );
}

/* ---------- taskbar ---------- */
const Letter = ({ c1, c2, c3, tile, ch }) => (
  <Svg w={24} h={24}>
    <rect x="5" y="1" width="19" height="22" rx="1" fill={c2} /><rect x="5" y="1" width="19" height="7" fill={c1} /><rect x="5" y="16" width="19" height="7" rx="1" fill={c3} />
    <rect x="0" y="6" width="13" height="13" rx="1" fill={tile} /><text x="6.500" y="16" fontSize="10" fontWeight="700" textAnchor="middle" fill="#fff">{ch}</text>
  </Svg>
);
const APPS = [
  { n: "office", i: <Svg w={24} h={24}><path d="M3 6l10-5v5l-5 2.500v9L3 19z" fill="#c8364b" /><path d="M13 1l8 2v18l-8 2.500z" fill="#e8590c" /><path d="M3 19l5-1.500 5 1v5z" fill="#d83b01" /></Svg> },
  { n: "edge", u: 2, i: <Svg w={24} h={24}><defs><linearGradient id="eg" x1="0" y1="0" x2="1" y2=".4"><stop stopColor="#1a9fe0" /><stop offset=".6" stopColor="#35c1b0" /><stop offset="1" stopColor="#7be04a" /></linearGradient></defs><circle cx="12" cy="12" r="12" fill="#0f6cbd" /><path d="M0 11C1 4 6 0 12 0c7 0 12 5 12 10 0 4-3 6-6.500 6-3 0-4-1-3-2.500 1.500-2 0-5-4-5C6 8.500 1 11 0 15z" fill="url(#eg)" /><path d="M8 12c-2 5 2 11 9 10.500 3-.8 5-3 6-5-5 2.500-9 .5-9-2.500z" fill="#124f9e" /></Svg> },
  { n: "explorer", u: 2, i: <Svg w={24} h={22}><path d="M1 2h8l2 2h12v6H1z" fill="#e0a010" /><path d="M1 6h22v14H1z" fill="#ffd764" /><path d="M5 21v-7q0-2 2-2h10q2 0 2 2v7h-4v-4H9v4z" fill="#2f8fe0" /></Svg> },
  { n: "store", i: <Svg w={24} h={24}><path d="M8 6V2q0-1.500 1.500-1.500h6Q17 .5 17 2v4" stroke="#ddd" strokeWidth="1.600" /><path d="M1 6h23l-1 17q0 1-1 1H3q-1 0-1-1z" fill="#f3f3f3" /><path d="M8 11h4v4H8z" fill="#f25022" /><path d="M13 11h4v4h-4z" fill="#7fba00" /><path d="M8 16h4v4H8z" fill="#00a4ef" /><path d="M13 16h4v4h-4z" fill="#ffb900" /></Svg> },
  { n: "mail", i: <Svg w={24} h={24}><path d="M0 9l12-8 12 8v14H0z" fill="#0f6cbd" /><path d="M2 8h20v8H2z" fill="#f5f5f5" /><path d="M0 9l12 8 12-8v14H0z" fill="#27b4f2" /><path d="M0 23l12-8 12 8z" fill="#1c9be6" /></Svg> },
  { n: "paint", i: <Svg w={24} h={24}><path d="M3 12C5 4 14 2 19 6s4 11-2 14-10 1-10-1-2-1-5 0c-2-1-1-4 1-7z" fill="#b9d7ea" /><circle cx="8" cy="10" r="2" fill="#e8a020" /><circle cx="13" cy="7" r="2" fill="#7bc043" /><circle cx="5.500" cy="15" r="1.800" fill="#d9404a" /><circle cx="11" cy="17" r="2" fill="#f5f5f5" /><path d="M22 3l-9 19" stroke="#e07a2a" strokeWidth="2" /><path d="M18 2l5-1 1 4-3 3z" fill="#c9a070" /></Svg> },
  { n: "docker", u: 1, i: <Svg w={24} h={24}><circle cx="12" cy="12" r="12" fill="#0ba5f5" /><path d="M4 12h14q1-2 2-1.500t-1 2.500c-2 4-5 5-8 5-5 0-7-3-7-6z" fill="#fff" /><path d="M5.500 9h9v2.500h-9zM8 7h6v2H8z" fill="#d9f0fd" /></Svg> },
  { n: "terminal", u: 1, i: <Svg w={24} h={20}><rect y="1" width="24" height="18" rx="1" fill="#4a4a4a" /><path d="M0 1h24v3H0z" fill="#ccc" /><path d="M3.500 7.500L8 11.500l-4.500 4" stroke="#ccc" strokeWidth="2.200" /><path d="M11 15.500h7" stroke="#fff" strokeWidth="2" /></Svg> },
  { n: "git", i: <Svg w={24} h={24}><rect width="24" height="24" fill="#3c3c3c" /><path d="M18.500 10L5 5M4.500 8L1.500 8M3 11l-2 10M4 22.500h8M11 18.500l7.500 2M13 18.500l4 4" stroke="#8ef000" strokeWidth="2.900" strokeLinecap="round" strokeDasharray=".1 2.900" /></Svg> },
  { n: "vscode", u: 1, i: <Svg w={24} h={24}><path d="M17 0l7 3v18l-7 3z" fill="#29a8f2" /><path d="M18 0v7L3 18.500 0 16.500z" fill="#0f7cc4" /><path d="M18 24v-7L3 5.500 0 7.500z" fill="#1c8fdb" /></Svg> },
  { n: "vs", i: <Svg w={24} h={24}><path d="M17 0l7 3v18l-7 3z" fill="#b57bee" /><path d="M0 7l3-1.500L18 17v7L17 24 0 9z" fill="#9a5be0" /><path d="M17 0l1 0v7L3 18.500 0 17z" fill="#6a32a8" /><path d="M0 7l2 1.500v7L0 17z" fill="#7b3fb8" /></Svg> },
  { n: "typora", u: 2, i: <Svg w={23} h={23}><rect width="23" height="22.500" rx="4" fill="#fafafa" /><text x="11.500" y="17" fontSize="17" fontFamily="Liberation Serif" fontWeight="700" textAnchor="middle" fill="#333">T</text></Svg> },
  { n: "chrome", u: 1, i: <Svg w={22} h={22}><circle cx="11" cy="11" r="11" fill="#1fa463" /><path d="M1.500 5.500C5-1.500 17-1.500 20.500 5.500H11L6.500 13z" fill="#dd4b3e" /><path d="M20.500 5.500C24 14 18 22 10.500 22l5-8.500L11 5.500z" fill="#ffd045" /><circle cx="11" cy="11" r="5" fill="#fff" /><circle cx="11" cy="11" r="4" fill="#4687f4" /></Svg> },
  { n: "teams", u: 2, i: <Svg w={24} h={26}><circle cx="13" cy="5" r="3.800" fill="#7b83eb" /><circle cx="20.500" cy="6" r="2.500" fill="#5059c9" /><path d="M8 10h10v8c0 6-10 6-10 0zM18 10h6v7c0 3-6 3-6 0z" fill="#6a72dc" /><rect x="-1" y="7" width="13" height="13" rx="1" fill="#4b53bc" /><text x="5.500" y="17" fontSize="10" fontWeight="700" textAnchor="middle" fill="#fff">T</text><circle cx="20.500" cy="20.500" r="4.700" fill="#c4122f" stroke="#eee" /></Svg> },
  { n: "outlook", u: 2, i: <Svg w={28} h={26}><rect x="8" y="1" width="16" height="18" fill="#1c8ee6" /><rect x="16" y="6" width="8" height="6" fill="#50c8f0" /><rect x="1" y="6" width="13" height="13" rx="1" fill="#0f64b8" /><text x="7.500" y="16" fontSize="10" fontWeight="700" textAnchor="middle" fill="#fff">O</text><path d="M12 15h15v11H12z" fill="#f0b870" /><path d="M12 15l7.500 7 7.500-7" fill="#fbe0b5" stroke="#8a5a20" /></Svg> },
  { n: "telegram", u: 1, i: <Svg w={28} h={26}><circle cx="14" cy="12" r="11" fill="#2aa1de" /><path d="M7 12l13-5-3 11-4-3z" fill="#fff" /><circle cx="20.500" cy="18.500" r="7.300" fill="#ee4035" /><text x="20.500" y="22.500" fontSize="11" textAnchor="middle" fill="#fff">4</text></Svg> },
  { n: "word", u: 2, i: <Letter c1="#41a5ee" c2="#2b7cd3" c3="#14509c" tile="#185abd" ch="W" /> },
  { n: "hex", u: 1, i: <Svg w={22} h={23}><path d="M11 0l10 5.500v11.500L11 23 1 17V5.500z" fill="#4a9a3c" /><path d="M11 0l10 5.500-7 7z" fill="#76c058" /><path d="M1 5.500L14 12.500 11 23 1 17z" fill="#3a8535" /></Svg> },
  { n: "excel", u: 3, i: <Letter c1="#33c481" c2="#21a366" c3="#107c41" tile="#107c41" ch="X" /> },
];
function Taskbar() {
  return (
    <footer className="flex h-[40px] bg-[#1c1c1c] text-white">
      <div className="flex w-[195px]">
        <div className="flex w-[48px] items-center justify-center"><Svg w={16} h={16}><path d="M0 2.300l6.600-.9v6.200H0zM7.500 1.300L16 0v7.600H7.500zM0 8.500h6.600v6.200L0 13.800zM7.500 8.500H16V16l-8.500-1.200z" fill="#fff" /></Svg></div>
        <div className="flex w-[48px] items-center justify-center"><Svg w={17} h={17}><circle cx="10.500" cy="6.300" r="5.300" stroke="#fff" strokeWidth="1.300" /><path d="M6.700 10.200L.8 16" stroke="#fff" strokeWidth="1.400" /></Svg></div>
        <div className="flex w-[48px] items-center justify-center"><Svg w={16} h={16}><circle cx="8" cy="8" r="6.700" stroke="#fff" strokeWidth="2.200" /></Svg></div>
        <div className="flex w-[48px] items-center justify-center"><Svg w={17} h={16}><path d="M1 0v2.500h10V0M1 16v-2.500h10V16M.6 5.500h10.800v5H.6zM14.500 0v3M14.500 9v7" stroke="#fff" strokeWidth="1.200" /><rect x="13" y="4.500" width="3" height="3" fill="#fff" /></Svg></div>
      </div>
      {APPS.map(({ n, u, i }) => (
        <div key={n} className={`mr-px flex w-[48px] shrink-0 flex-col items-center ${u === 3 ? "bg-[#4a4a4a]" : ""}`}>
          <div className="flex h-[38px] w-[28px] items-center justify-center pt-[2px]">{i}</div>
          {u && <div className={`flex h-[2px] bg-[#76b9ed] ${u === 3 ? "w-full" : "w-[40px]"}`}>{u === 2 && <i className="ml-auto w-[9px] bg-[#4f7ea3]" />}</div>}
        </div>
      ))}
      <div className="mr-[5px] ml-auto flex flex-col items-center pt-[2px] pr-[1px] text-[10.950px] leading-[18px]"><span>12:17</span><span>04/10/2021</span></div>
    </footer>
  );
}

export default function App() {
  return (
    <div className="h-[1024px] w-[1280px] overflow-hidden bg-[#e6e6e6] font-['Open_Sans','Noto_Sans',sans-serif] text-[#444]">
      <TitleBar />
      <div className="h-[127px] bg-[#f3f2f1]"><Tabs /><Ribbon /></div>
      <FormulaBar />
      <div className="flex h-[755px]"><SheetArea /><TaskPane /></div>
      <StatusBar />
      <Taskbar />
    </div>
  );
}
